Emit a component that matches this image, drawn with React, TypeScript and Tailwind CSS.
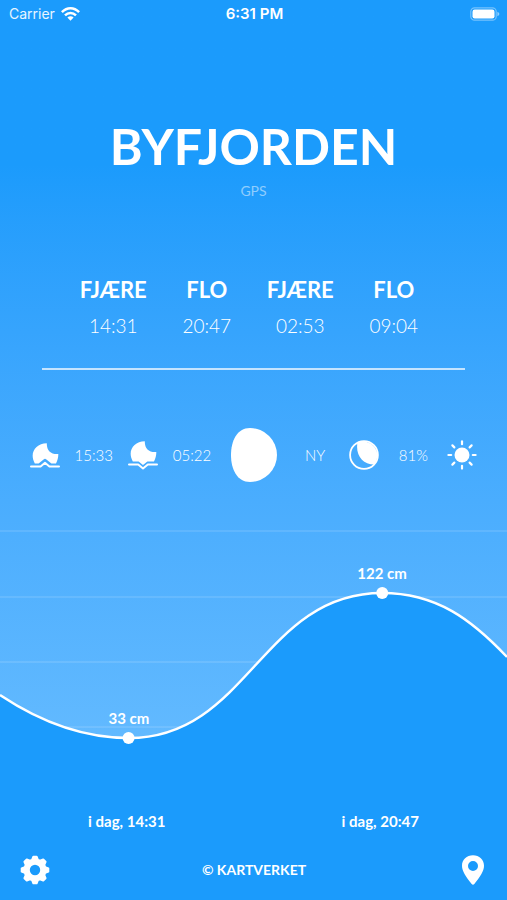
import type { ReactNode } from "react";

const tides = [
  { kind: "FJÆRE", time: "14:31" },
  { kind: "FLO", time: "20:47" },
  { kind: "FJÆRE", time: "02:53" },
  { kind: "FLO", time: "09:04" },
];

const chartWidth = 507;
const chartHeight = 230;
const gridLines = [11, 77, 142, 207];
const curve =
  "M0 175 C36 199 80 218 129 218 C248 218 262 73 382 73 C437 73 472 100 507 137";
const points = [
  { x: 129, y: 218, label: "33 cm", when: "i dag, 14:31" },
  { x: 382, y: 73, label: "122 cm", when: "i dag, 20:47" },
];

function percent(value: number, total: number) {
  return `${(value / total) * 100}%`;
}

function gearPath() {
  const parts: string[] = [];
  for (let i = 0; i < 8; i++) {
    const a = i * 45 - 90;
    const corners: [number, number][] = [
      [a - 16, 10.6],
      [a - 7, 13.4],
      [a + 7, 13.4],
      [a + 16, 10.6],
    ];
    for (const [deg, r] of corners) {
      const t = (deg * Math.PI) / 180;
      parts.push(`${(15 + r * Math.cos(t)).toFixed(2)} ${(15 + r * Math.sin(t)).toFixed(2)}`);
    }
  }
  return `M${parts.join("L")}Z M21.2 15 A6.2 6.2 0 1 0 8.8 15 A6.2 6.2 0 1 0 21.2 15Z`;
}

function WifiIcon() {
  return (
    <svg className="h-[14px] w-[19px]" viewBox="0 0 19 14" fill="none" stroke="currentColor" strokeWidth="2.5" aria-hidden="true">
      <path d="M.9 5.2 C6 0 13 0 18.1 5.2" />
      <path d="M4 8.4 C7.2 5.2 11.8 5.2 15 8.4" />
      <path d="M9.5 13.8 L6.4 10.6 C8.2 8.9 10.8 8.9 12.6 10.6Z" fill="currentColor" stroke="none" />
    </svg>
  );
}

function BatteryIcon() {
  return (
    <svg className="h-[14px] w-[30px]" viewBox="0 0 30 14" aria-hidden="true">
      <rect x=".8" y=".8" width="25.4" height="12.4" rx="3.8" fill="none" stroke="#fff" strokeOpacity=".4" strokeWidth="1.2" />
      <rect x="2.5" y="2.5" width="22" height="9" rx="2.2" fill="#fff" />
      <path d="M27.4 4.8 Q29.4 5.6 29.4 7 Q29.4 8.4 27.4 9.2Z" fill="#fff" fillOpacity=".5" />
    </svg>
  );
}

function MoonsetIcon() {
  return (
    <svg className="h-[30px] w-[30px]" viewBox="0 0 30 30" fill="currentColor" aria-hidden="true">
      <path d="M16.8 3.2 C16.6 10.5 21 14.6 28.3 14 C28.4 17.4 27.6 20.4 26 23.4 H21.4 L16.4 19.4 Q15 18.3 13.6 19.4 L8.6 23.4 H4.8 C-1 13.2 5.6 3.4 16.8 3.2Z" />
      <path d="M1 26.4 H10.6 L15 22.8 L19.4 26.4 H29" fill="none" stroke="currentColor" strokeWidth="2" strokeLinecap="round" strokeLinejoin="round" />
    </svg>
  );
}

function MoonriseIcon() {
  return (
    <svg className="h-[30px] w-[30px]" viewBox="0 0 30 30" fill="currentColor" aria-hidden="true">
      <path d="M16.8 1.2 C16.6 8.5 21 12.6 28.3 12 C28.4 15.4 27.6 18.4 26 21.4 H19.4 L15 25 L10.6 21.4 H4.8 C-1 11.2 5.6 1.4 16.8 1.2Z" />
      <path d="M1 24.4 H10.2 L15 28.4 L19.8 24.4 H29" fill="none" stroke="currentColor" strokeWidth="2" strokeLinecap="round" strokeLinejoin="round" />
    </svg>
  );
}

function MoonPhase() {
  return (
    <svg className="h-[54px] w-[46px]" viewBox="0 0 46 54" fill="currentColor" role="img" aria-label="81%">
      <path d="M19 0 A27 27 0 0 1 19 54 C6 54 0 41 0 27 C0 13 6 0 19 0Z" />
    </svg>
  );
}

function CrescentIcon() {
  return (
    <svg className="h-[30px] w-[30px]" viewBox="0 0 30 30" aria-hidden="true">
      <circle cx="15" cy="15" r="13.9" fill="none" stroke="currentColor" strokeWidth="1.8" />
      <path d="M8.4 3 A13.9 13.9 0 0 1 25 24.6 C14 24.4 6.4 15.4 8.4 3Z" fill="currentColor" />
    </svg>
  );
}

function SunIcon() {
  const angles = [0, 45, 90, 135, 180, 225, 270, 315];
  return (
    <svg className="h-[30px] w-[30px]" viewBox="0 0 30 30" aria-hidden="true">
      <circle cx="15" cy="15" r="7.5" fill="currentColor" />
      {angles.map((a) => (
        <path key={a} d="M15 1.4 V4.2" stroke="currentColor" strokeWidth="2.2" strokeLinecap="round" transform={`rotate(${a} 15 15)`} />
      ))}
    </svg>
  );
}

function Cell({ children }: { children: ReactNode }) {
  return <div className="flex items-center justify-center">{children}</div>;
}

function StatusBar() {
  return (
    <header className="grid h-7 grid-cols-3 items-center pr-[7px] pl-[9px] font-[Inter,sans-serif]">
      <div className="flex items-center gap-[6px] text-sm leading-5">
        <span className="text-white/90">Carrier</span>
        <WifiIcon />
      </div>
      <span className="text-center text-[15px] leading-5 font-semibold">6:31 PM</span>
      <div className="flex justify-end">
        <BatteryIcon />
      </div>
    </header>
  );
}

function TideChart() {
  return (
    <div className="relative h-[230px]">
      <svg
        className="block h-full w-full"
        viewBox={`0 0 ${chartWidth} ${chartHeight}`}
        preserveAspectRatio="none"
        aria-hidden="true"
      >
        {gridLines.map((y) => (
          <path key={y} d={`M0 ${y} H${chartWidth}`} stroke="#fff" strokeOpacity=".11" strokeWidth="2" />
        ))}
        <path d={`${curve} V${chartHeight} H0Z`} fill="#1b9bfc" />
        <path d={curve} fill="none" stroke="#fff" strokeWidth="2.5" vectorEffect="non-scaling-stroke" />
      </svg>
      {points.map((p) => (
        <div
          key={p.label}
          className="absolute flex -translate-x-1/2 -translate-y-full flex-col items-center"
          style={{ left: percent(p.x, chartWidth), top: percent(p.y + 6, chartHeight) }}
        >
          <span className="text-[15px] leading-5 font-bold whitespace-nowrap">{p.label}</span>
          <span className="mt-1 h-3 w-3 rounded-full bg-white" />
        </div>
      ))}
    </div>
  );
}

export default function App() {
  return (
    <main className="flex min-h-screen flex-col bg-[#1b9bfc] font-[Lato,sans-serif] text-white">
      <div className="bg-linear-to-b from-[#1b9bfc] from-22% to-[#63baff]">
        <StatusBar />
        <section className="pt-[88px] text-center">
          <h1 className="text-[50px] leading-[60px] font-bold">BYFJORDEN</h1>
          <p className="pt-[5px] text-sm leading-5 text-white/50">GPS</p>
        </section>

        <section className="mx-auto mt-[75px] grid w-[374px] grid-cols-4 text-center">
          {tides.map((t) => (
            <div key={t.time}>
              <h2 className="text-[22px] leading-7 font-bold">{t.kind}</h2>
              <p className="mt-2 text-[19px] leading-7 font-light">{t.time}</p>
            </div>
          ))}
        </section>
        <hr className="mx-[42px] mt-[28px] border-t-2 border-white/70" />

        <section className="mt-[58px] flex items-center px-5 text-[15px] leading-5 font-light">
          <div className="grid flex-1 grid-cols-4">
            <Cell><MoonsetIcon /></Cell>
            <Cell>15:33</Cell>
            <Cell><MoonriseIcon /></Cell>
            <Cell>05:22</Cell>
          </div>
          <div className="flex w-[74px] justify-center">
            <MoonPhase />
          </div>
          <div className="grid flex-1 grid-cols-4">
            <Cell>NY</Cell>
            <Cell><CrescentIcon /></Cell>
            <Cell>81%</Cell>
            <Cell><SunIcon /></Cell>
          </div>
        </section>

        <div className="mt-[38px]">
          <TideChart />
        </div>
      </div>

      <div className="grid grid-cols-2 pt-[61px] text-center text-[15px] leading-5 font-bold">
        {points.map((p) => (
          <p key={p.when}>{p.when}</p>
        ))}
      </div>

      <footer className="mt-6 flex items-center justify-between pr-[19px] pl-5">
        <button type="button" aria-label="Innstillinger">
          <svg className="h-[30px] w-[30px]" viewBox="0 0 30 30" aria-hidden="true">
            <path d={gearPath()} fill="#fff" stroke="#fff" strokeWidth="2" strokeLinejoin="round" fillRule="evenodd" />
          </svg>
        </button>
        <span className="text-sm leading-5 font-bold">© KARTVERKET</span>
        <button type="button" aria-label="Velg sted">
          <svg className="h-[30px] w-[30px]" viewBox="0 0 30 30" fill="#fff" aria-hidden="true">
            <path fillRule="evenodd" d="M15 .3 C21.3 .3 26 4.9 26 10.8 C26 16 22.4 21.5 16.3 29 Q15 30.4 13.7 29 C7.6 21.5 4 16 4 10.8 C4 4.9 8.7 .3 15 .3Z M15 6 A5 5 0 1 0 15 16 A5 5 0 1 0 15 6Z" />
          </svg>
        </button>
      </footer>
    </main>
  );
}
